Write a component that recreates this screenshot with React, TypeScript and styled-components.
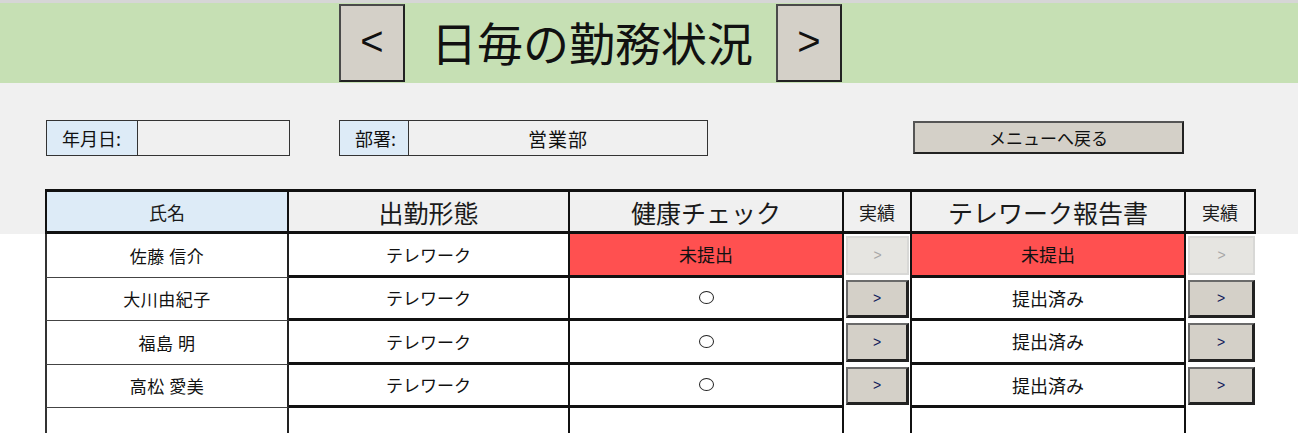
import styled, { createGlobalStyle, css } from 'styled-components';

const GlobalStyle = createGlobalStyle`
  body {
    margin: 0;
    background: #ffffff;
    font-family: "Noto Sans CJK JP", "Noto Sans", sans-serif;
    color: #111;
  }
`;

const COLUMNS = '244px 281px 274px 68px 274px 70px';

interface RowType {
  name: string;
  style: string;
  health: string;
  report: string;
  submitted: boolean;
}

const rows: RowType[] = [
  { name: '佐藤 信介', style: 'テレワーク', health: '未提出', report: '未提出', submitted: false },
  { name: '大川由紀子', style: 'テレワーク', health: '〇', report: '提出済み', submitted: true },
  { name: '福島 明', style: 'テレワーク', health: '〇', report: '提出済み', submitted: true },
  { name: '高松 愛美', style: 'テレワーク', health: '〇', report: '提出済み', submitted: true },
];

export default function App() {
  return (
    <Page>
      <GlobalStyle />
      <TitleBand>
        <NavButton>&lt;</NavButton>
        <Title>日毎の勤務状況</Title>
        <NavButton>&gt;</NavButton>
      </TitleBand>

      <GraySection>
        <FilterBar>
          <Field>
            <FieldLabel width={91}>年月日:</FieldLabel>
            <FieldValue width={151} />
          </Field>
          <Field>
            <FieldLabel width={69}>部署:</FieldLabel>
            <FieldValue width={298}>営業部</FieldValue>
          </Field>
          <MenuButton>メニューへ戻る</MenuButton>
        </FilterBar>

        <HeaderRow>
          <HeadCell tone="blue" size={18}>氏名</HeadCell>
          <HeadCell>出勤形態</HeadCell>
          <HeadCell>健康チェック</HeadCell>
          <HeadCell size={18}>実績</HeadCell>
          <HeadCell>テレワーク報告書</HeadCell>
          <HeadCell size={18}>実績</HeadCell>
        </HeaderRow>
      </GraySection>

      <Body>
        {rows.map((row) => (
          <Row key={row.name}>
            <NameCell>{row.name}</NameCell>
            <Cell>{row.style}</Cell>
            <Cell alert={!row.submitted} size={18}>
              {row.submitted ? <Circle /> : row.health}
            </Cell>
            <ButtonCell>
              <RowButton disabled={!row.submitted}>&gt;</RowButton>
            </ButtonCell>
            <Cell alert={!row.submitted} size={18}>
              {row.report}
            </Cell>
            <ButtonCell last>
              <RowButton disabled={!row.submitted}>&gt;</RowButton>
            </ButtonCell>
          </Row>
        ))}
        <Row>
          <NameCell />
          <Cell open />
          <Cell open />
          <ButtonCell />
          <Cell open />
          <ButtonCell last />
        </Row>
      </Body>
    </Page>
  );
}

const Page = styled.div`
  width: 1298px;
  height: 433px;
  overflow: hidden;
`;

const TitleBand = styled.div`
  height: 80px;
  border-top: 3px solid #d6d6d6;
  background: #c6e0b4;
  display: flex;
  align-items: center;
  padding-left: 339px;
`;

const NavButton = styled.div`
  box-sizing: border-box;
  width: 66px;
  height: 78px;
  background: #d4d0c8;
  border: 2px solid #4a4a4a;
  border-right-color: #222;
  border-bottom-color: #222;
  display: flex;
  align-items: center;
  justify-content: center;
  font-family: "Liberation Sans", Arial, sans-serif;
  font-size: 40px;
  color: #111;
  padding-bottom: 4px;
`;

const Title = styled.div`
  margin: 0 23px 0 26px;
  font-size: 46px;
  line-height: 1;
  color: #111;
  padding-bottom: 4px;
`;

const GraySection = styled.div`
  background: #f0f0f0;
  padding-top: 37px;
  height: 151px;
  box-sizing: border-box;
`;

const FilterBar = styled.div`
  display: flex;
  align-items: flex-start;
  padding-left: 46px;
  height: 36px;
  margin-bottom: 33px;
`;

const Field = styled.div`
  display: flex;
  height: 36px;
  border: 1px solid #333;
  box-sizing: border-box;
  margin-right: 49px;
`;

const FieldLabel = styled.div<{ width: number }>`
  width: ${({ width }) => width}px;
  box-sizing: border-box;
  background: #ddebf7;
  border-right: 1px solid #333;
  display: flex;
  align-items: center;
  padding-left: 15px;
  font-size: 18px;
`;

const FieldValue = styled.div<{ width: number }>`
  width: ${({ width }) => width}px;
  display: flex;
  align-items: center;
  justify-content: center;
  font-size: 19px;
  letter-spacing: 1px;
`;

const MenuButton = styled.div`
  margin-left: 156px;
  margin-top: 1px;
  box-sizing: border-box;
  width: 271px;
  height: 33px;
  background: #d4d0c8;
  border: 2px solid #555;
  border-right-color: #222;
  border-bottom-color: #222;
  display: flex;
  align-items: center;
  justify-content: center;
  font-size: 17px;
`;

const HeaderRow = styled.div`
  display: grid;
  grid-template-columns: ${COLUMNS};
  margin-left: 45px;
  width: max-content;
  height: 45px;
`;

const HeadCell = styled.div<{ tone?: 'blue'; size?: number }>`
  box-sizing: border-box;
  border-top: 3px solid #111;
  border-bottom: 3px solid #111;
  border-right: 2px solid #111;
  &:first-child {
    border-left: 2px solid #111;
  }
  background: ${({ tone }) => (tone === 'blue' ? '#ddebf7' : '#f0f0f0')};
  display: flex;
  align-items: center;
  justify-content: center;
  font-size: ${({ size }) => size ?? 25}px;
  color: #1a1a1a;
`;

const Body = styled.div`
  margin-left: 45px;
`;

const Row = styled.div`
  display: grid;
  grid-template-columns: ${COLUMNS};
  height: 43.5px;
`;

const NameCell = styled.div`
  box-sizing: border-box;
  border-left: 2px solid #333;
  border-right: 2px solid #222;
  border-bottom: 1.5px solid #444;
  background: #fff;
  display: flex;
  align-items: center;
  justify-content: center;
  font-size: 17px;
  letter-spacing: 0.5px;
`;

const Cell = styled.div<{ alert?: boolean; open?: boolean; size?: number }>`
  box-sizing: border-box;
  border-right: 2px solid #111;
  border-bottom: 3px solid #111;
  background: ${({ alert }) => (alert ? '#ff5050' : '#fff')};
  display: flex;
  align-items: center;
  justify-content: center;
  font-size: ${({ size }) => size ?? 17}px;
  ${({ open }) =>
    open &&
    css`
      border-bottom: none;
    `}
`;

const ButtonCell = styled.div<{ last?: boolean }>`
  box-sizing: border-box;
  border-right: ${({ last }) => (last ? 'none' : '2px solid #111')};
  padding: 2px 1px 3px 2px;
  display: flex;
`;

const RowButton = styled.div<{ disabled?: boolean }>`
  flex: 1;
  box-sizing: border-box;
  display: flex;
  align-items: center;
  justify-content: center;
  font-family: "Liberation Sans", Arial, sans-serif;
  font-size: 14px;
  ${({ disabled }) =>
    disabled
      ? css`
          background: #e6e5e1;
          border: 2px solid #d8d8d6;
          color: #a8a8a8;
        `
      : css`
          background: #d4d0c8;
          border: 2px solid #6a6a6a;
          border-right: 3px solid #222;
          border-bottom: 3px solid #222;
          color: #10205a;
        `}
`;

const Circle = styled.span`
  width: 13px;
  height: 11px;
  border: 1.5px solid #222;
  border-radius: 50%;
`;
